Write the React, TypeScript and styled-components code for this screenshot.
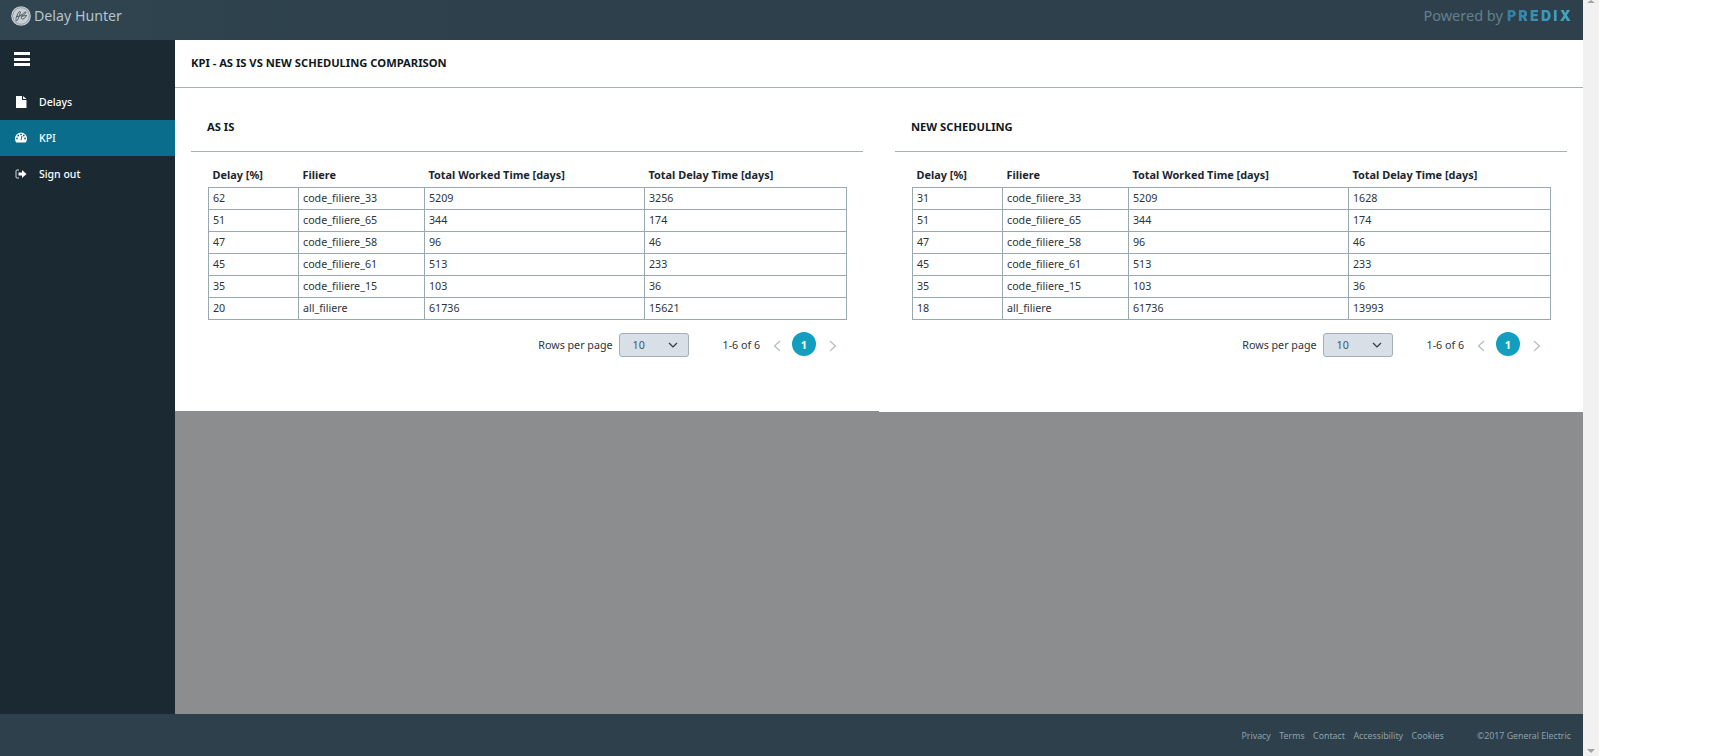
import React from "react";
import styled, { createGlobalStyle } from "styled-components";

const GlobalStyle = createGlobalStyle`
  html, body { margin: 0; padding: 0; background: #fff; height: 100%; overflow: hidden; }
  #root { height: 100%; }
  * { box-sizing: border-box; }
`;

const FONT = `"Noto Sans", "Open Sans", "Liberation Sans", sans-serif`;

const Frame = styled.div`
  display: flex;
  width: 1731px;
  height: 756px;
  font-family: ${FONT};
  background: #fff;
`;
const Shell = styled.div`
  width: 1583px;
  height: 756px;
  display: flex;
  flex-direction: column;
`;
const Scrollbar = styled.div`
  width: 16px;
  height: 756px;
  background: #f1f1f1;
  display: flex;
  flex-direction: column;
  justify-content: space-between;
  align-items: center;
  padding: 0 0 3px;
`;
const ArrowUp = styled.div`
  width: 0; height: 0;
  border-left: 4px solid transparent;
  border-right: 4px solid transparent;
  border-bottom: 3px solid #a3a3a3;
`;
const ArrowDown = styled.div`
  width: 0; height: 0;
  border-left: 4px solid transparent;
  border-right: 4px solid transparent;
  border-top: 4px solid #a3a3a3;
`;
const TopBar = styled.header`
  height: 40px;
  flex: none;
  background: linear-gradient(90deg, #304550, #2d404c 30%);
  display: flex;
  align-items: center;
  justify-content: space-between;
  padding: 0 10px 10px 11px;
`;
const Brand = styled.div`
  display: flex;
  align-items: center;
  gap: 3px;
  padding-top: 2px;
  color: #b6c3cc;
  font-size: 14.2px;
  line-height: 20px;
`;
const Powered = styled.div`
  display: flex;
  align-items: center;
  gap: 4px;
  color: #62808f;
  font-size: 14.5px;
`;
const Predix = styled.span`
  font-family: "Inter", "Noto Sans", sans-serif;
  font-weight: 900;
  font-size: 14px;
  letter-spacing: 2.3px;
  background: linear-gradient(90deg, #2f7fa6, #45a9c5);
  -webkit-background-clip: text;
  background-clip: text;
  color: transparent;
`;
const Middle = styled.div`
  flex: 1;
  display: flex;
  min-height: 0;
`;
const Sidebar = styled.nav`
  width: 175px;
  flex: none;
  background: #1b2933;
  display: flex;
  flex-direction: column;
`;
const Burger = styled.div`
  height: 44px;
  padding: 12px 14px 0;
  display: flex;
  flex-direction: column;
  gap: 2.5px;
  & > span {
    display: block;
    width: 16px;
    height: 3px;
    background: #fff;
  }
`;
const NavItem = styled.div<{ $active?: boolean }>`
  height: 36px;
  display: flex;
  align-items: center;
  padding: 0 0 1px 15px;
  gap: 12px;
  color: #fff;
  font-size: 10.5px;
  font-weight: 500;
  background: ${(p) => (p.$active ? "#0a6d8b" : "transparent")};
`;
const NavIcon = styled.span`
  width: 12px;
  height: 12px;
  display: flex;
  align-items: center;
  justify-content: center;
  & svg { display: block; }
`;
const Content = styled.main`
  flex: 1;
  min-width: 0;
  background: #8c8d8f;
  display: flex;
  flex-direction: column;
`;
const TitleBar = styled.div`
  height: 48px;
  flex: none;
  background: #fff;
  border-bottom: 1px solid #a7b0b6;
  padding: 0 16px 3px;
  display: flex;
  align-items: center;
  font-size: 11.2px;
  font-weight: 700;
  color: #10181d;
`;
const Panels = styled.div`
  display: grid;
  grid-template-columns: 704px 704px;
  align-items: start;
`;
const Panel = styled.section<{ $height: number }>`
  height: ${(p) => p.$height}px;
  background: #fff;
  padding: 0 16px;
`;
const PanelHead = styled.div`
  height: 64px;
  border-bottom: 1px solid #a7b0b6;
  padding: 30px 0 0 16px;
  font-size: 11.2px;
  line-height: 18px;
  font-weight: 700;
  color: #10181d;
`;
const TableWrap = styled.div`
  padding: 11px 17px 0;
`;
const Table = styled.table`
  width: 638px;
  table-layout: fixed;
  border-collapse: collapse;
  font-size: 10.7px;
  color: #2d3439;
  & th {
    height: 24px;
    padding: 0 4px 1px;
    text-align: left;
    font-weight: 700;
    color: #1c262d;
    font-size: 10.9px;
    border: none;
  }
  & td {
    height: 22px;
    padding: 0 4px 1px;
    border: 1px solid #9aa8b0;
  }
`;
const Pager = styled.div`
  display: flex;
  align-items: center;
  justify-content: flex-end;
  height: 24px;
  margin-top: 13px;
  padding-right: 9px;
  font-size: 10.7px;
  color: #2d3439;
`;
const RowsLabel = styled.span`
  margin-right: 6px;
`;
const Select = styled.div`
  width: 70px;
  height: 24px;
  border: 1px solid #a3afb7;
  border-radius: 3px;
  background: #d8dfe6;
  display: flex;
  align-items: center;
  justify-content: space-between;
  padding: 0 10px 0 13px;
  margin-right: 34px;
  color: #45555f;
`;
const Range = styled.span`
  margin-right: 13px;
`;
const PageDot = styled.div`
  width: 24px;
  height: 24px;
  border-radius: 50%;
  background: #129ebf;
  color: #fff;
  font-weight: 700;
  font-size: 11px;
  display: flex;
  align-items: center;
  justify-content: center;
  margin: -1px 13px 0 11px;
`;
const PagerArrow = styled.svg`
  width: 8px;
  height: 12px;
  margin-top: 3px;
  fill: none;
  stroke: #b4bdc3;
  stroke-width: 1.2;
`;
const Footer = styled.footer`
  height: 42px;
  flex: none;
  background: #2d404c;
  display: flex;
  align-items: center;
  justify-content: flex-end;
  padding: 2px 12px 0 0;
  color: #8ea2ae;
  font-size: 8.8px;
`;
const FooterLink = styled.span`
  margin-right: 8.5px;
`;
const Copyright = styled.span`
  margin-left: 33px;
`;

const GeLogo = () => (
  <svg width="20" height="20" viewBox="0 0 20 20">
    <circle cx="10" cy="10" r="9.8" fill="#c9d0d4" />
    <circle cx="10" cy="10" r="8.3" fill="none" stroke="#5c6c76" strokeWidth="0.5" />
    <path
      d="M5 12.5c1-3.500 2.500-7 4-7 1 0-1 6-2.500 8.500-.8 1.400-2 1.200-1.500-.2M6 10.500c2 0 3-.5 4-1.500M10 9.500c2-1 3.500-4 4.800-3.500 1 .6-2.500 3.500-3.800 4-1 .6-1 3 .5 3 1.400 0 2.700-1 3.500-2.500M11 10c1.500-.2 3 0 4.500-.5"
      fill="none"
      stroke="#46565f"
      strokeWidth="1"
      strokeLinecap="round"
    />
  </svg>
);

const FileIcon = () => (
  <svg width="11" height="12" viewBox="0 0 11 12" fill="#fff">
    <path d="M0 0h6v4h4.500v8H0zM7 0l3.500 3H7z" />
  </svg>
);
const GaugeIcon = () => (
  <svg width="12" height="11" viewBox="0 0 12 11">
    <path fill="#fff" d="M6 0.500a6 6 0 0 1 6 6c0 1.600-.5 3-1.300 4H1.300C.5 9.500 0 8.100 0 6.500a6 6 0 0 1 6-6z" />
    <circle cx="2" cy="6.500" r="0.900" fill="#0a6d8b" />
    <circle cx="3.200" cy="3.500" r="0.900" fill="#0a6d8b" />
    <circle cx="6" cy="2.400" r="0.900" fill="#0a6d8b" />
    <circle cx="8.800" cy="3.500" r="0.900" fill="#0a6d8b" />
    <circle cx="10" cy="6.500" r="0.900" fill="#0a6d8b" />
    <path d="M6 8L7 4" stroke="#0a6d8b" strokeWidth="1" />
  </svg>
);
const SignOutIcon = () => (
  <svg width="12" height="10" viewBox="0 0 12 10">
    <path d="M4 1H2a1 1 0 0 0-1 1v6a1 1 0 0 0 1 1h2" fill="none" stroke="#d5dbdf" strokeWidth="1" />
    <path d="M3.500 3.500H7V1l4.500 4L7 9V6.500H3.500z" fill="#fff" />
  </svg>
);

const Chevron = ({ dir }: { dir: "left" | "right" }) => (
  <PagerArrow viewBox="0 0 8 12">
    <path d={dir === "left" ? "M7 1L1.500 6L7 11" : "M1 1L6.500 6L1 11"} />
  </PagerArrow>
);

type Row = [number, string, number, number];

const asIs: Row[] = [
  [62, "code_filiere_33", 5209, 3256],
  [51, "code_filiere_65", 344, 174],
  [47, "code_filiere_58", 96, 46],
  [45, "code_filiere_61", 513, 233],
  [35, "code_filiere_15", 103, 36],
  [20, "all_filiere", 61736, 15621],
];
const newSched: Row[] = [
  [31, "code_filiere_33", 5209, 1628],
  [51, "code_filiere_65", 344, 174],
  [47, "code_filiere_58", 96, 46],
  [45, "code_filiere_61", 513, 233],
  [35, "code_filiere_15", 103, 36],
  [18, "all_filiere", 61736, 13993],
];

const KpiPanel = ({ title, rows, height }: { title: string; rows: Row[]; height: number }) => (
  <Panel $height={height}>
    <PanelHead>{title}</PanelHead>
    <TableWrap>
      <Table>
        <colgroup>
          <col style={{ width: 90 }} />
          <col style={{ width: 126 }} />
          <col style={{ width: 220 }} />
          <col style={{ width: 202 }} />
        </colgroup>
        <thead>
          <tr>
            <th>Delay [%]</th>
            <th>Filiere</th>
            <th>Total Worked Time [days]</th>
            <th>Total Delay Time [days]</th>
          </tr>
        </thead>
        <tbody>
          {rows.map((r) => (
            <tr key={r[1]}>
              {r.map((c, i) => (
                <td key={i}>{c}</td>
              ))}
            </tr>
          ))}
        </tbody>
      </Table>
      <Pager>
        <RowsLabel>Rows per page</RowsLabel>
        <Select>
          <span>10</span>
          <svg width="10" height="6" viewBox="0 0 10 6" fill="none" stroke="#2b3a44" strokeWidth="1.2">
            <path d="M1 1l4 4 4-4" />
          </svg>
        </Select>
        <Range>1-6 of 6</Range>
        <Chevron dir="left" />
        <PageDot>1</PageDot>
        <Chevron dir="right" />
      </Pager>
    </TableWrap>
  </Panel>
);

export default function App() {
  return (
    <Frame>
      <GlobalStyle />
      <Shell>
        <TopBar>
          <Brand>
            <GeLogo />
            <span>Delay Hunter</span>
          </Brand>
          <Powered>
            <span>Powered by</span>
            <Predix>PREDIX</Predix>
          </Powered>
        </TopBar>
        <Middle>
          <Sidebar>
            <Burger>
              <span />
              <span />
              <span />
            </Burger>
            <NavItem>
              <NavIcon><FileIcon /></NavIcon>
              Delays
            </NavItem>
            <NavItem $active>
              <NavIcon><GaugeIcon /></NavIcon>
              KPI
            </NavItem>
            <NavItem>
              <NavIcon><SignOutIcon /></NavIcon>
              Sign out
            </NavItem>
          </Sidebar>
          <Content>
            <TitleBar>KPI - AS IS VS NEW SCHEDULING COMPARISON</TitleBar>
            <Panels>
              <KpiPanel title="AS IS" rows={asIs} height={323} />
              <KpiPanel title="NEW SCHEDULING" rows={newSched} height={324} />
            </Panels>
          </Content>
        </Middle>
        <Footer>
          <FooterLink>Privacy</FooterLink>
          <FooterLink>Terms</FooterLink>
          <FooterLink>Contact</FooterLink>
          <FooterLink>Accessibility</FooterLink>
          <span>Cookies</span>
          <Copyright>©2017 General Electric</Copyright>
        </Footer>
      </Shell>
      <Scrollbar>
        <ArrowUp />
        <ArrowDown />
      </Scrollbar>
    </Frame>
  );
}
